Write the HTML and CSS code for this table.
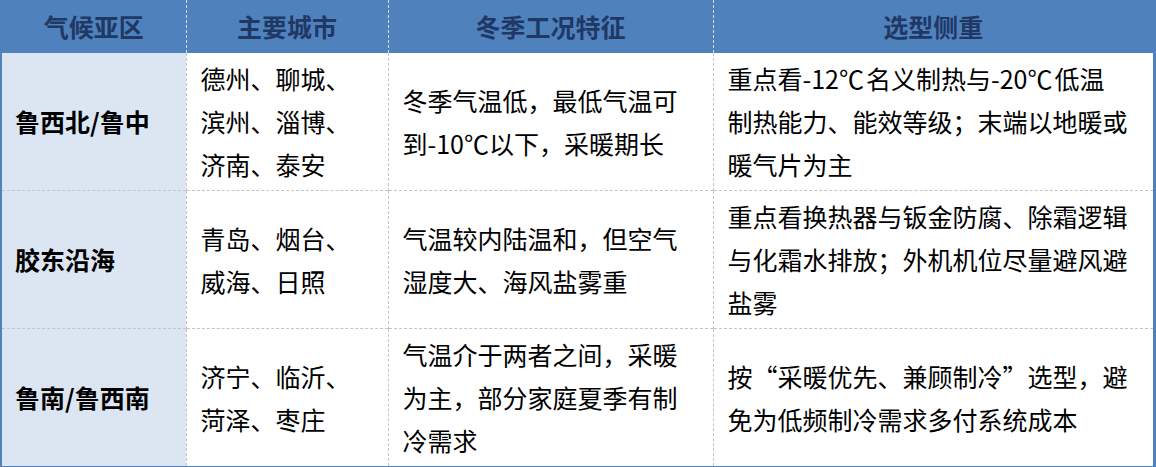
FILE: index.html
```html
<!DOCTYPE html>
<html lang="zh-CN">
<head>
<meta charset="utf-8">
<link rel="stylesheet" href="styles.css">
</head>
<body>
<div class="frame">
<table class="grid">
  <colgroup>
    <col class="c1"><col class="c2"><col class="c3"><col class="c4">
  </colgroup>
  <thead>
    <tr>
      <th>气候亚区</th>
      <th>主要城市</th>
      <th>冬季工况特征</th>
      <th>选型侧重</th>
    </tr>
  </thead>
  <tbody>
    <tr>
      <td class="zone">鲁西北/鲁中</td>
      <td>德州、聊城、滨州、淄博、济南、泰安</td>
      <td>冬季气温低，最低气温可到-10℃以下，采暖期长</td>
      <td class="wide">重点看-12<span class="deg">℃</span>名义制热与-20<span class="deg">℃</span>低温<br>制热能力、能效等级；末端以地暖或暖气片为主</td>
    </tr>
    <tr>
      <td class="zone">胶东沿海</td>
      <td>青岛、烟台、威海、日照</td>
      <td>气温较内陆温和，但空气湿度大、海风盐雾重</td>
      <td class="wide">重点看换热器与钣金防腐、除霜逻辑与化霜水排放；外机机位尽量避风避盐雾</td>
    </tr>
    <tr>
      <td class="zone">鲁南/鲁西南</td>
      <td>济宁、临沂、菏泽、枣庄</td>
      <td>气温介于两者之间，采暖为主，部分家庭夏季有制冷需求</td>
      <td class="wide">按“采暖优先、兼顾制冷”选型，避免为低频制冷需求多付系统成本</td>
    </tr>
  </tbody>
</table>
</div>
</body>
</html>
```

FILE: styles.css
```css
html, body {
  margin: 0;
  padding: 0;
  background: #ffffff;
}

.frame {
  width: 1156px;
  box-sizing: border-box;
  border-left: 2px solid #4f81bd;
  border-right: 3px solid #4f81bd;
  border-bottom: 3px solid #4f81bd;
  background: #ffffff;
  font-family: "Noto Sans CJK SC", "Noto Sans", sans-serif;
}

.grid {
  width: 100%;
  border-collapse: collapse;
  table-layout: fixed;
}

.c1 { width: 184px; }
.c2 { width: 202px; }
.c3 { width: 325px; }
.c4 { width: auto; }

.grid th {
  height: 53px;
  padding: 0 14px;
  background: #4f81bd;
  color: #1f3864;
  font-size: 25px;
  font-weight: 700;
  text-align: center;
  vertical-align: middle;
  border-left: 1px dashed #d6dde8;
  line-height: 53px;
}

.grid th:first-child {
  border-left: none;
}

.grid td {
  padding: 4px 14px;
  font-size: 25px;
  line-height: 43px;
  color: #000000;
  vertical-align: middle;
  text-align: left;
  border-left: 1px dashed #c4c4c4;
  border-top: 1px dashed #c4c4c4;
  height: 128px;
}

.grid tbody tr:first-child td {
  border-top: none;
}

.grid td:first-child {
  border-left: none;
}

.grid td.zone {
  background: #dce6f2;
  font-weight: 700;
  padding-left: 13px;
}

.grid td.wide {
  padding-right: 20px;
}

.deg {
  letter-spacing: 2px;
}
```
